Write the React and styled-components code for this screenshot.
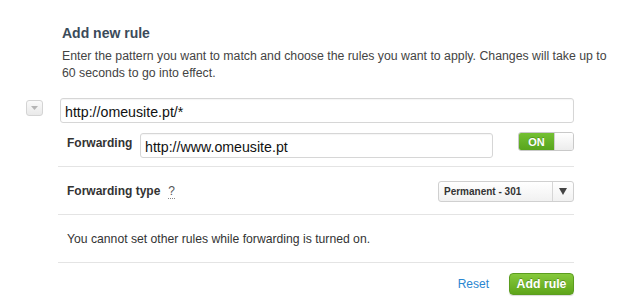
import React, { useState } from "react";
import styled, { createGlobalStyle } from "styled-components";

const GlobalStyle = createGlobalStyle`
  html, body {
    margin: 0;
    padding: 0;
    background: #ffffff;
    font-family: "Liberation Sans", Arial, Helvetica, sans-serif;
  }
`;

const Page = styled.div`
  width: 620px;
  height: 305px;
  box-sizing: border-box;
  padding: 24px 46px 0 26px;
`;

const Header = styled.div`
  padding-left: 36px;
  margin-right: -40px;
`;

const Title = styled.div`
  font-size: 14px;
  font-weight: bold;
  color: #3b4b5a;
  line-height: 18px;
`;

const Description = styled.div`
  margin-top: 6px;
  font-size: 12.3px;
  line-height: 17px;
  color: #444;
`;

const RuleRow = styled.div`
  display: flex;
  margin-top: 16px;
`;

const CollapseButton = styled.button`
  width: 17px;
  height: 16px;
  margin-top: 2px;
  margin-right: 17px;
  padding: 0;
  border: 1px solid #d4d4d4;
  border-radius: 3px;
  background: linear-gradient(#fafafa, #e9e9e9);
  display: flex;
  align-items: center;
  justify-content: center;
  flex-shrink: 0;
`;

const RuleBody = styled.div`
  flex: 1;
  display: flex;
  flex-direction: column;
`;

const TextInput = styled.input`
  box-sizing: border-box;
  height: 25px;
  width: ${(p) => p.$width || "100%"};
  border: 1px solid #d6d6d6;
  border-radius: 3px;
  padding: 2px 4px 0;
  font-family: "Liberation Sans", Arial, sans-serif;
  font-size: 14.2px;
  color: #111;
  outline: none;
  box-shadow: inset 0 1px 1px rgba(0, 0, 0, 0.04);
`;

const ForwardRow = styled.div`
  display: flex;
  align-items: flex-start;
  margin-top: 10px;
  padding: 0 0 8px 9px;
  margin-left: -2px;
  border-bottom: 1px solid #e4e4e4;
`;

const Label = styled.div`
  font-size: 12px;
  font-weight: bold;
  color: #333;
  width: ${(p) => p.$width || "auto"};
  padding-top: ${(p) => p.$top || 0}px;
  flex-shrink: 0;
`;

const Toggle = styled.div`
  margin-left: auto;
  margin-top: -1px;
  width: 56px;
  height: 19px;
  box-sizing: border-box;
  border: 1px solid #c9c9c9;
  border-radius: 3px;
  display: flex;
  overflow: hidden;
`;

const ToggleOn = styled.div`
  width: 35px;
  background: linear-gradient(#74c033, #58a51d);
  color: #fff;
  font-size: 11px;
  font-weight: bold;
  display: flex;
  align-items: center;
  justify-content: center;
  text-shadow: 0 -1px 0 rgba(0, 0, 0, 0.2);
`;

const ToggleKnob = styled.div`
  flex: 1;
  background: linear-gradient(#ffffff, #ececec);
  border-left: 1px solid #cfcfcf;
`;

const Section = styled.div`
  display: flex;
  align-items: center;
  height: 47px;
  padding-left: 9px;
  margin-left: -2px;
  border-bottom: 1px solid #e4e4e4;
`;

const Help = styled.span`
  margin-left: 8px;
  font-weight: normal;
  color: #555;
  border-bottom: 1px dotted #888;
  line-height: 13px;
`;

const Select = styled.div`
  margin-left: auto;
  margin-top: 1px;
  width: 136px;
  height: 21px;
  box-sizing: border-box;
  border: 1px solid #d0d0d0;
  border-radius: 3px;
  background: linear-gradient(#ffffff, #f1f1f1);
  display: flex;
  align-items: center;
  font-size: 10px;
  font-weight: bold;
  color: #333;
`;

const SelectValue = styled.div`
  flex: 1;
  padding-left: 5px;
`;

const SelectArrow = styled.div`
  width: 20px;
  height: 100%;
  border-left: 1px solid #d6d6d6;
  display: flex;
  align-items: center;
  justify-content: center;
`;

const Notice = styled.div`
  font-size: 12.2px;
  color: #333;
`;

const Footer = styled.div`
  display: flex;
  justify-content: flex-end;
  align-items: center;
  margin-top: 10px;
  gap: 20px;
`;

const LinkButton = styled.a`
  font-size: 12px;
  color: #2a86d1;
  text-decoration: none;
  cursor: pointer;
`;

const PrimaryButton = styled.button`
  height: 22px;
  width: 65px;
  padding: 0;
  border: 1px solid #5b9d1f;
  border-radius: 4px;
  background: linear-gradient(#86c93c, #5ea51a);
  color: #fff;
  font-family: "Liberation Sans", Arial, sans-serif;
  font-size: 12.3px;
  font-weight: bold;
  text-shadow: 0 -1px 0 rgba(0, 0, 0, 0.25);
  box-shadow: 0 1px 1px rgba(0, 0, 0, 0.15);
`;

export default function App() {
  const [pattern, setPattern] = useState("http://omeusite.pt/*");
  const [target, setTarget] = useState("http://www.omeusite.pt");

  return (
    <>
      <GlobalStyle />
      <Page>
        <Header>
          <Title>Add new rule</Title>
          <Description>
            Enter the pattern you want to match and choose the rules you want to
            apply. Changes will take up to 60 seconds to go into effect.
          </Description>
        </Header>
        <RuleRow>
          <CollapseButton>
            <svg width="7" height="4" viewBox="0 0 7 4">
              <path d="M0 0 L7 0 L3.5 4 Z" fill="#b5b5b5" />
            </svg>
          </CollapseButton>
          <RuleBody>
            <TextInput
              value={pattern}
              onChange={(e) => setPattern(e.target.value)}
            />
            <ForwardRow>
              <Label $width="73px" $top={3}>
                Forwarding
              </Label>
              <TextInput
                $width="353px"
                value={target}
                onChange={(e) => setTarget(e.target.value)}
              />
              <Toggle>
                <ToggleOn>ON</ToggleOn>
                <ToggleKnob />
              </Toggle>
            </ForwardRow>
            <Section>
              <Label>
                Forwarding type<Help>?</Help>
              </Label>
              <Select>
                <SelectValue>Permanent - 301</SelectValue>
                <SelectArrow>
                  <svg width="8" height="7" viewBox="0 0 8 7">
                    <path d="M0 0 L8 0 L4 7 Z" fill="#444" />
                  </svg>
                </SelectArrow>
              </Select>
            </Section>
            <Section>
              <Notice>
                You cannot set other rules while forwarding is turned on.
              </Notice>
            </Section>
            <Footer>
              <LinkButton>Reset</LinkButton>
              <PrimaryButton>Add rule</PrimaryButton>
            </Footer>
          </RuleBody>
        </RuleRow>
      </Page>
    </>
  );
}
